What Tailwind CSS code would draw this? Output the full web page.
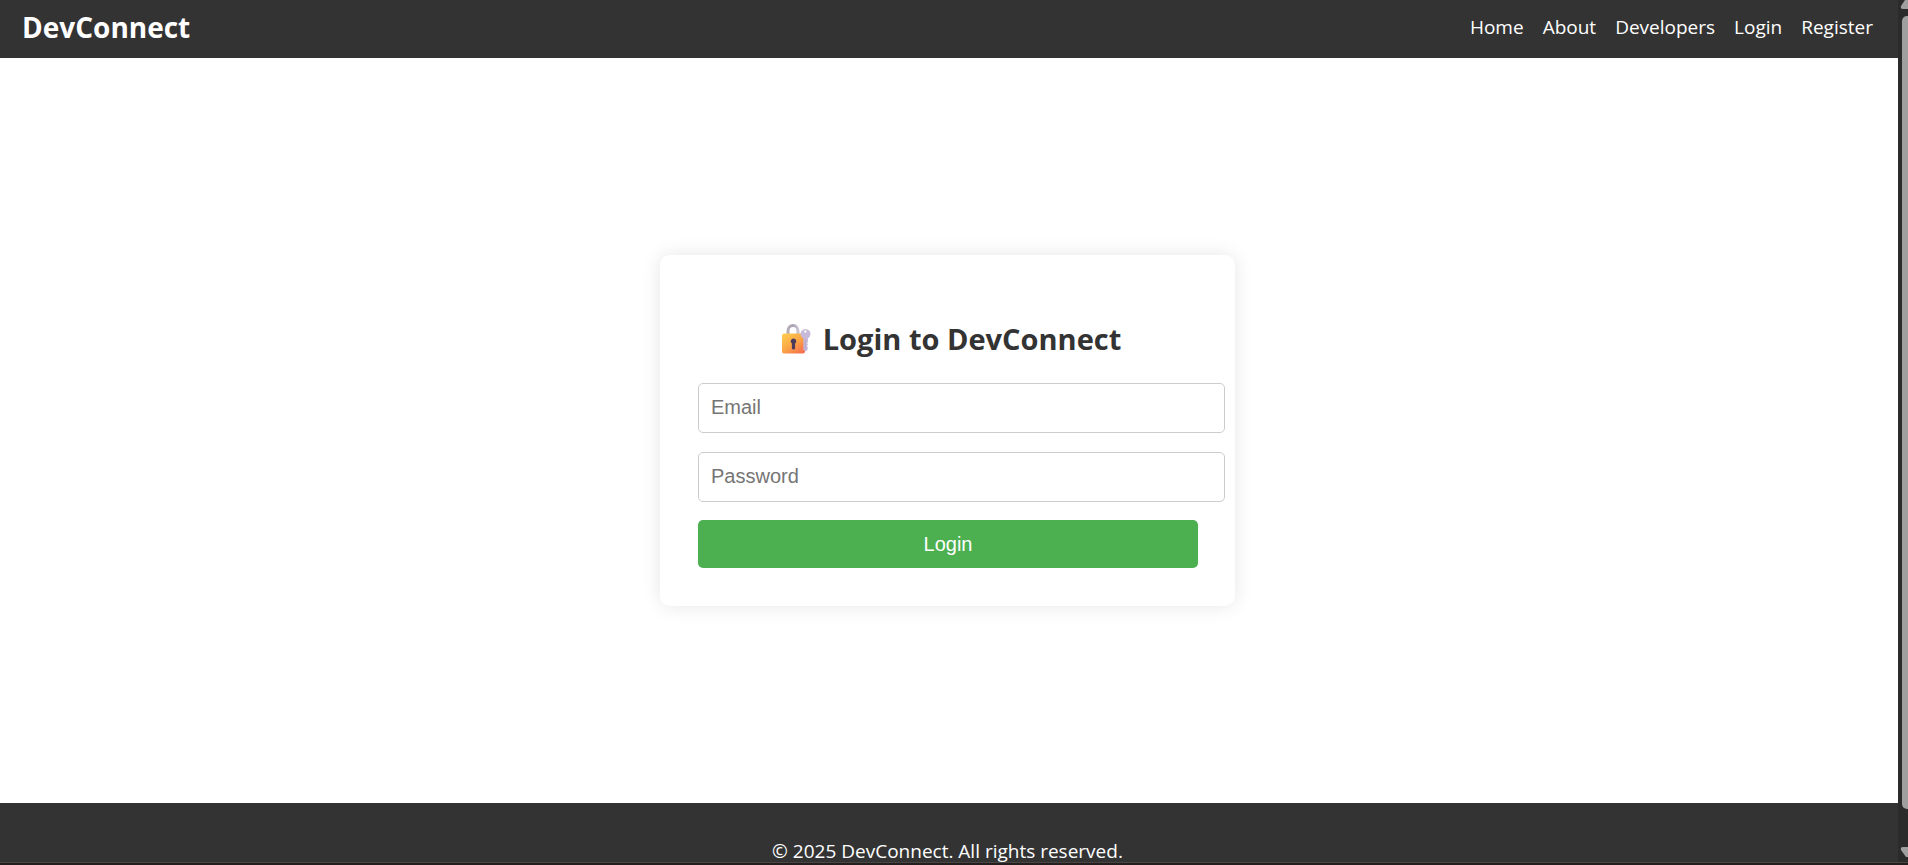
<!DOCTYPE html>
<html lang="en">
<head>
<meta charset="utf-8">
<meta name="viewport" content="width=device-width, initial-scale=1">
<title>DevConnect - Login</title>
<script src="https://cdn.jsdelivr.net/npm/@tailwindcss/browser@4"></script>
</head>
<body class="h-screen overflow-hidden flex flex-col bg-white font-['Segoe_UI','Open_Sans',sans-serif] text-[19px] text-[#333]">
<div class="flex-1 min-h-0 flex">
  <div class="flex-1 min-w-0 flex flex-col">
    <header class="shrink-0 h-[58px] px-[22px] pb-1 flex items-center justify-between bg-[#333] text-white">
      <h1 class="text-[28px] leading-10 font-bold">DevConnect</h1>
      <nav class="flex gap-[19px] pr-[3px]">
        <a href="#">Home</a>
        <a href="#">About</a>
        <a href="#">Developers</a>
        <a href="#">Login</a>
        <a href="#">Register</a>
      </nav>
    </header>
    <main class="flex-1 flex items-center justify-center pr-[3px]">
      <form class="w-[575px] p-[38px] pr-[37px] rounded-[10px] bg-white shadow-[0_0_19px_rgba(0,0,0,0.1)] font-['Liberation_Sans',Arial,sans-serif] text-[20px]">
        <h2 class="my-[25px] h-10 pt-[2px] pl-[6px] flex items-center justify-center gap-3 font-['Segoe_UI','Open_Sans',sans-serif] text-[29px] leading-10 font-bold">
          <svg class="w-[30px] h-[30px]" viewBox="0 0 30 30" aria-hidden="true">
            <defs>
              <linearGradient id="body" x1="0" y1="0" x2="0.8" y2="1"><stop offset="0" stop-color="#ffd04f"/><stop offset="0.55" stop-color="#fba646"/><stop offset="1" stop-color="#f5704f"/></linearGradient>
              <linearGradient id="shackle" x1="0" y1="0" x2="1" y2="0"><stop offset="0" stop-color="#b3acb7"/><stop offset="0.5" stop-color="#aaa2b3"/><stop offset="1" stop-color="#cbc3d3"/></linearGradient>
            </defs>
            <path d="M7 11V7a5 5.500 0 0 1 10 0v4" fill="none" stroke="url(#shackle)" stroke-width="3"/>
            <rect x="1" y="9.500" width="23" height="20" rx="2" fill="url(#body)"/>
            <path d="M12.500 14.500a2.800 2.800 0 0 1 1.600 5.100V24a1.600 1.600 0 0 1-3.200 0v-4.400a2.800 2.800 0 0 1 1.600-5.100z" fill="#4a3a5c"/>
            <path d="M22 14.300a5 5 0 1 1 5 0V18l-1 1 1 1.500-1 1.500 1 1.500-.6 2.500-1.800 1.500-2.200-1.500V14.300z" fill="#c7b9d8"/>
            <circle cx="24.300" cy="7.500" r="1.200" fill="#fff"/>
            <path d="M24.300 15v11" stroke="#b5a6ca" stroke-width="1"/>
          </svg>
          <span>Login to DevConnect</span>
        </h2>
        <input type="email" aria-label="Email" placeholder="Email" class="block w-[calc(100%+27px)] h-[50px] px-3 pb-[2px] mb-[19px] border border-[#ccc] rounded-[5px] bg-white placeholder:text-[#757575]">
        <input type="password" aria-label="Password" placeholder="Password" class="block w-[calc(100%+27px)] h-[50px] px-3 pb-[2px] mb-[18px] border border-[#ccc] rounded-[5px] bg-white placeholder:text-[#757575]">
        <button type="submit" class="block w-full h-12 rounded-[5px] bg-[#4caf50] text-white">Login</button>
      </form>
    </main>
    <footer class="shrink-0 h-[59px] pt-[37px] pr-[3px] bg-[#333] text-center leading-[22px] text-white">
      <p>© 2025 DevConnect. All rights reserved.</p>
    </footer>
  </div>
  <div class="w-[10px] shrink-0 flex flex-col items-end justify-between overflow-hidden bg-[#2b2b2b]" aria-hidden="true">
    <svg class="w-2 h-[9px] shrink-0" viewBox="0 0 8 9"><path d="M8 0H5L1 6Q0 9 3 9H8z" fill="#9f9f9f"/></svg>
    <div class="w-[6px] mt-[7px] h-[793px] rounded-l-[5px] bg-[#9f9f9f]"></div>
    <svg class="w-2 h-[10px] mt-auto mb-[5px] shrink-0" viewBox="0 0 8 10"><path d="M8 10H6L1 3Q0 0 3 0H8z" fill="#9f9f9f"/></svg>
  </div>
</div>
<div class="relative shrink-0 h-[3px] border-t border-[#4a4644] bg-[#241f1e]"></div>
</body>
</html>
